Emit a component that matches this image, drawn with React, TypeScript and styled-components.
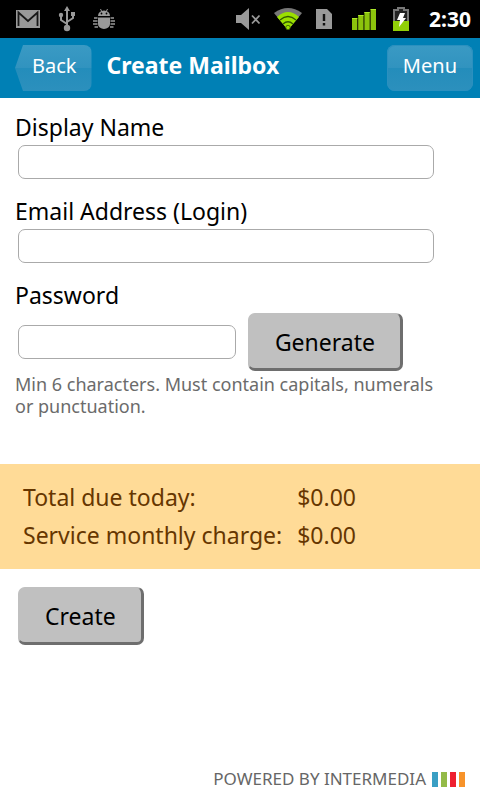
import React from "react";
import styled, { createGlobalStyle } from "styled-components";

const GlobalStyle = createGlobalStyle`
  *, *::before, *::after { box-sizing: border-box; }
  body { margin: 0; background: #fff; }
  body, button, input { font-family: "Noto Sans", "Open Sans", sans-serif; }
`;

const Screen = styled.div`
  display: flex;
  flex-direction: column;
  min-height: 100vh;
  background: #fff;
  color: #000;
`;

const StatusBar = styled.div`
  display: flex;
  align-items: center;
  justify-content: space-between;
  height: 38px;
  padding: 0 9px 0 15px;
  background: #000;
`;

const IconGroup = styled.div<{ $gap: number }>`
  display: flex;
  align-items: center;
  gap: ${(p) => p.$gap}px;
  svg { display: block; }
`;

const Clock = styled.time`
  color: #fff;
  font-size: 21px;
  line-height: 28px;
  font-weight: 700;
`;

const Header = styled.header`
  display: flex;
  align-items: center;
  height: 60px;
  padding: 0 7px 0 15px;
  background: #0080b5;
  color: #fff;
`;

const Title = styled.h1`
  flex: 1;
  margin: 0 0 6px 15px;
  font-size: 23px;
  line-height: 30px;
  font-weight: 700;
`;

const NavButton = styled.button<{ $back?: boolean }>`
  height: 46px;
  padding: ${(p) => (p.$back ? "0 15px 5px 17px" : "0 16px 5px")};
  border: 0;
  border-radius: 8px;
  background: linear-gradient(#3a9ac4 0%, #3193bf 50%, #248dbb 51%, #2c90bd 100%);
  box-shadow: ${(p) => (p.$back ? "none" : "inset 0 0 0 1px #2b90bf")};
  clip-path: ${(p) => (p.$back ? "polygon(8px 0, 100% 0, 100% 100%, 8px 100%, 0 50%)" : "none")};
  color: #fff;
  font-size: 20px;
  line-height: 30px;
`;

const Form = styled.form`
  display: flex;
  flex: 1;
  flex-direction: column;
`;

const Fields = styled.div`
  display: flex;
  flex-direction: column;
  gap: 18px;
  padding: 15px 28px 0 15px;
`;

const Field = styled.div`
  display: flex;
  flex-direction: column;
`;

const Label = styled.label`
  margin-bottom: 4px;
  font-size: 23px;
  line-height: 28px;
`;

const TextInput = styled.input`
  flex: 1;
  min-width: 0;
  height: 34px;
  padding: 0 8px;
  border: 1px solid #aaa;
  border-radius: 7px;
  background: #fff;
  font-size: 20px;
`;

const InputRow = styled.div<{ $end: number }>`
  display: flex;
  align-items: center;
  gap: 12px;
  padding: 0 ${(p) => p.$end}px 0 3px;
`;

const Button = styled.button`
  height: 58px;
  padding: 2px 25px 0 26px;
  border: solid;
  border-width: 1px 3px 3px 1px;
  border-color: #c0c0c0 #6e6e6e #6e6e6e #c0c0c0;
  border-radius: 7px;
  background: #c0c0c0;
  color: #000;
  font-size: 23px;
  line-height: 30px;
`;

const Hint = styled.p`
  margin: 2px 0 0;
  color: #6b6b6b;
  font-size: 18px;
  line-height: 22px;
`;

const Charges = styled.table`
  display: block;
  margin-top: 47px;
  padding: 14px 15px 15px 23px;
  border-spacing: 0;
  background: #ffdb97;
  color: #663600;
  font-size: 23px;
  line-height: 38px;

  th, td { padding: 0; font-weight: 400; text-align: left; }
  th { padding-right: 15px; }
`;

const Actions = styled.div`
  padding: 18px 18px 0;
`;

const Footer = styled.footer`
  display: flex;
  align-items: center;
  justify-content: flex-end;
  gap: 6px;
  padding: 0 15px 9px;
  color: #666;
  font-size: 17px;
  line-height: 24px;
`;

const Bars = styled.span`
  display: flex;
  gap: 3px;
`;

const Bar = styled.span<{ $color: string }>`
  width: 6px;
  height: 15px;
  background: ${(p) => p.$color};
`;

const MailIcon = () => (
  <svg width="26" height="20" viewBox="0 0 26 20" aria-hidden="true">
    <path d="M1 1h24v18H1z" fill="#999" />
    <path d="M3.500 17V3.500l9.500 8.500 9.500-8.500V17" fill="none" stroke="#181818" strokeWidth="1.800" />
  </svg>
);

const UsbIcon = () => (
  <svg width="18" height="26" viewBox="0 0 18 26" fill="none" stroke="#999" strokeWidth="2" aria-hidden="true">
    <path d="M9 4v18M9 18l-6-4V9M9 16l6-4V8" />
    <path d="M9 0l3 5H6zM13 6h4v4h-4z" fill="#999" stroke="none" />
    <circle cx="3" cy="9" r="2.2" fill="#999" stroke="none" />
    <circle cx="9" cy="22" r="3.2" fill="#999" stroke="none" />
  </svg>
);

const AndroidBugIcon = () => (
  <svg width="22" height="22" viewBox="0 0 22 22" aria-hidden="true">
    <path d="M5 8a6 5.500 0 0 1 12 0zM5 9.500h12V16a6 5 0 0 1-12 0z" fill="#999" />
    <path d="M7.500 1l1.500 3M14.500 1L13 4" fill="none" stroke="#999" />
    <path d="M1 10h3.500M0 13h4.500M0 16h4.500M1.500 19h3.500M17.500 10H21M17.500 13H22M17.500 16H22M17 19h3.500" fill="none" stroke="#999" strokeWidth="1.500" />
    <circle cx="8.500" cy="5.500" r="0.900" />
    <circle cx="13.500" cy="5.500" r="0.900" />
  </svg>
);

const MutedIcon = () => (
  <svg width="26" height="24" viewBox="0 0 26 24" aria-hidden="true">
    <path d="M1 8h5l8-7v22l-8-7H1z" fill="#999" />
    <path d="M17 8.500l7.500 8M24.500 8.500l-7.500 8" stroke="#999" strokeWidth="1.800" />
  </svg>
);

const WifiIcon = () => (
  <svg width="30" height="24" viewBox="0 0 30 24" aria-hidden="true">
    <path d="M1 6Q15-4 29 6L15 23z" fill="#777" />
    <path d="M4 10Q15 0 26 10L15 23z" fill="#9be000" />
    <path d="M7 13Q15 6 23 13M10 17Q15 12.500 20 17" fill="none" stroke="#315800" strokeWidth="1.300" />
    <circle cx="15" cy="20.500" r="2.200" fill="#9be000" stroke="#315800" strokeWidth="0.800" />
  </svg>
);

const SimAlertIcon = () => (
  <svg width="18" height="20" viewBox="0 0 18 20" aria-hidden="true">
    <path d="M1 0h11l5 5v15H1z" fill="#999" />
    <path d="M7.800 5h2.400v7H7.800zM7.800 14h2.400v2.400H7.800z" fill="#111" />
  </svg>
);

const SignalIcon = () => (
  <svg width="24" height="22" viewBox="0 0 24 22" fill="#8cc40c" aria-hidden="true">
    <path d="M0 10h5.300v12H0zM6.200 7h5.300v15H6.200zM12.400 4h5.300v18h-5.300zM18.600 1H24v21h-5.400z" />
    <path d="M0 10h5.300v1H0zM6.200 7h5.300v1H6.200zM12.400 4h5.300v1h-5.300zM18.600 1H24v1h-5.400z" fill="#aee82a" />
  </svg>
);

const BatteryIcon = () => (
  <svg width="18" height="24" viewBox="0 0 18 24" aria-hidden="true">
    <path d="M6 1h6v2h4v20H2V3h4z" fill="#222" stroke="#777" strokeWidth="2" />
    <path d="M1 14h16v10H1z" fill="#91cf08" />
    <path d="M8 6h5l-2 5h3l-7 9 1-7H5z" fill="#fff" />
  </svg>
);

const charges = [
  { label: "Total due today:", amount: "$0.00" },
  { label: "Service monthly charge:", amount: "$0.00" },
];

export default function App() {
  return (
    <Screen>
      <GlobalStyle />
      <StatusBar>
        <IconGroup $gap={17}>
          <MailIcon />
          <UsbIcon />
          <AndroidBugIcon />
        </IconGroup>
        <IconGroup $gap={19}>
          <IconGroup $gap={12}>
            <MutedIcon />
            <WifiIcon />
            <SimAlertIcon />
          </IconGroup>
          <IconGroup $gap={16}>
            <SignalIcon />
            <BatteryIcon />
          </IconGroup>
          <Clock>2:30</Clock>
        </IconGroup>
      </StatusBar>
      <Header>
        <NavButton type="button" $back>Back</NavButton>
        <Title>Create Mailbox</Title>
        <NavButton type="button">Menu</NavButton>
      </Header>
      <Form onSubmit={(e) => e.preventDefault()}>
        <Fields>
          <Field>
            <Label htmlFor="display-name">Display Name</Label>
            <InputRow $end={18}>
              <TextInput id="display-name" type="text" />
            </InputRow>
          </Field>
          <Field>
            <Label htmlFor="email">Email Address (Login)</Label>
            <InputRow $end={18}>
              <TextInput id="email" type="email" />
            </InputRow>
          </Field>
          <Field>
            <Label htmlFor="password">Password</Label>
            <InputRow $end={49}>
              <TextInput id="password" type="password" aria-describedby="password-hint" />
              <Button type="button">Generate</Button>
            </InputRow>
            <Hint id="password-hint">
              Min 6 characters. Must contain capitals, numerals or punctuation.
            </Hint>
          </Field>
        </Fields>
        <Charges>
          <tbody>
            {charges.map((c) => (
              <tr key={c.label}>
                <th scope="row">{c.label}</th>
                <td>{c.amount}</td>
              </tr>
            ))}
          </tbody>
        </Charges>
        <Actions>
          <Button type="submit">Create</Button>
        </Actions>
      </Form>
      <Footer>
        POWERED BY INTERMEDIA
        <Bars aria-hidden="true">
          <Bar $color="#3a9fc4" />
          <Bar $color="#94ba48" />
          <Bar $color="#ee2030" />
          <Bar $color="#f7932a" />
        </Bars>
      </Footer>
    </Screen>
  );
}
